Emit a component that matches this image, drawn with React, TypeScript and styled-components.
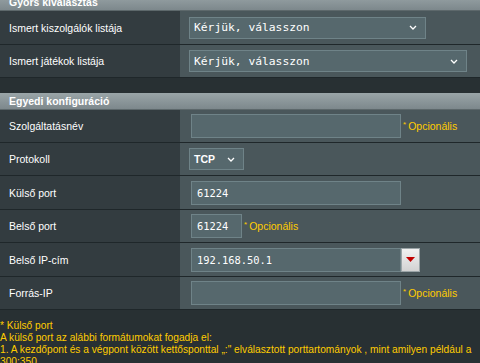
import styled, { createGlobalStyle } from 'styled-components';

const GlobalStyle = createGlobalStyle`
  html, body {
    margin: 0;
    padding: 0;
    background: #283033;
  }
  body {
    font-family: 'Liberation Sans', Arial, sans-serif;
    overflow: hidden;
  }
`;

const Page = styled.div`
  width: 480px;
  margin-top: -6px;
`;

const FormTable = styled.div`
  display: flex;
  flex-direction: column;
  & + & {
    margin-top: 15px;
  }
`;

const Header = styled.div`
  height: 17px;
  display: flex;
  align-items: center;
  padding-left: 9px;
  background: linear-gradient(to bottom, #9aa5a8 0%, #7d888c 100%);
  color: #fff;
  font-size: 10.5px;
  font-weight: bold;
  border-bottom: 1px solid #5d686b;
  box-sizing: border-box;
`;

const Row = styled.div<{ $height?: number }>`
  display: grid;
  grid-template-columns: 180px 1fr;
  height: ${(p) => p.$height ?? 33}px;
  border-bottom: 1px solid #1f272a;
  box-sizing: border-box;
`;

const Label = styled.div`
  background: #333c40;
  color: #fff;
  font-size: 10.5px;
  display: flex;
  align-items: center;
  padding-left: 9px;
`;

const Cell = styled.div`
  background: #4a575b;
  display: flex;
  align-items: center;
  padding-left: 9px;
  gap: 2px;
`;

const SelectBox = styled.div<{ $width: number }>`
  width: ${(p) => p.$width}px;
  height: 22px;
  box-sizing: border-box;
  background: #56686d;
  border: 1px solid #6f8388;
  color: #fff;
  display: flex;
  align-items: center;
  justify-content: space-between;
  padding: 0 8px 0 4px;
`;

const MonoText = styled.span<{ $size: number }>`
  font-family: 'DejaVu Sans Mono', 'Liberation Mono', monospace;
  font-size: ${(p) => p.$size}px;
  color: #fff;
`;

const SansBold = styled.span`
  font-size: 10.5px;
  font-weight: bold;
  color: #fff;
`;

const TextInput = styled.div<{ $width: number }>`
  width: ${(p) => p.$width}px;
  height: 24px;
  margin-left: 2px;
  box-sizing: border-box;
  background: #56686d;
  border: 1px solid #6f8388;
  display: flex;
  align-items: center;
  padding-left: 5px;
`;

const Optional = styled.span`
  color: #ffcc00;
  font-size: 10.5px;
  sup {
    font-size: 8px;
    vertical-align: 3px;
    margin-right: 2px;
  }
`;

const InputGroup = styled.div`
  display: flex;
  align-items: stretch;
  margin-left: 2px;
  height: 24px;
  & > ${TextInput} {
    margin-left: 0;
  }
`;

const DropButton = styled.div`
  width: 19px;
  box-sizing: border-box;
  background: linear-gradient(to bottom, #f1f1f1, #d2d2d2);
  border: 1px solid #9aa4a7;
  display: flex;
  align-items: center;
  justify-content: center;
`;

const Notes = styled.div`
  margin-top: 10px;
  color: #ffcc00;
  font-size: 10.2px;
  line-height: 12px;
`;

function Chevron() {
  return (
    <svg width="8" height="5" viewBox="0 0 8 5">
      <path d="M1 1 L4 4 L7 1" fill="none" stroke="#fff" strokeWidth="1.3" />
    </svg>
  );
}

function Opcionalis() {
  return (
    <Optional>
      <sup>*</sup>Opcionális
    </Optional>
  );
}

export default function App() {
  return (
    <>
      <GlobalStyle />
      <Page>
        <FormTable>
          <Header>Gyors kiválasztás</Header>
          <Row $height={34}>
            <Label>Ismert kiszolgálók listája</Label>
            <Cell>
              <SelectBox $width={237}>
                <MonoText $size={11.3}>Kérjük, válasszon</MonoText>
                <Chevron />
              </SelectBox>
            </Cell>
          </Row>
          <Row>
            <Label>Ismert játékok listája</Label>
            <Cell>
              <SelectBox $width={278}>
                <MonoText $size={11.3}>Kérjük, válasszon</MonoText>
                <Chevron />
              </SelectBox>
            </Cell>
          </Row>
        </FormTable>

        <FormTable>
          <Header>Egyedi konfiguráció</Header>
          <Row>
            <Label>Szolgáltatásnév</Label>
            <Cell>
              <TextInput $width={210} />
              <Opcionalis />
            </Cell>
          </Row>
          <Row>
            <Label>Protokoll</Label>
            <Cell>
              <SelectBox $width={55}>
                <SansBold>TCP</SansBold>
                <Chevron />
              </SelectBox>
            </Cell>
          </Row>
          <Row $height={34}>
            <Label>Külső port</Label>
            <Cell>
              <TextInput $width={210}>
                <MonoText $size={10.4}>61224</MonoText>
              </TextInput>
            </Cell>
          </Row>
          <Row>
            <Label>Belső port</Label>
            <Cell>
              <TextInput $width={51}>
                <MonoText $size={10.4}>61224</MonoText>
              </TextInput>
              <Opcionalis />
            </Cell>
          </Row>
          <Row $height={34}>
            <Label>Belső IP-cím</Label>
            <Cell>
              <InputGroup>
                <TextInput $width={210}>
                  <MonoText $size={10.4}>192.168.50.1</MonoText>
                </TextInput>
                <DropButton>
                  <svg width="9" height="5" viewBox="0 0 9 5">
                    <path d="M0 0 L9 0 L4.5 5 Z" fill="#c00000" />
                  </svg>
                </DropButton>
              </InputGroup>
            </Cell>
          </Row>
          <Row>
            <Label>Forrás-IP</Label>
            <Cell>
              <TextInput $width={210} />
              <Opcionalis />
            </Cell>
          </Row>
        </FormTable>

        <Notes>
          <div>* Külső port</div>
          <div>A külső port az alábbi formátumokat fogadja el:</div>
          <div>
            1. A kezdőpont és a végpont között kettősponttal „:" elválasztott porttartományok , mint amilyen például a
            300:350
          </div>
        </Notes>
      </Page>
    </>
  );
}
